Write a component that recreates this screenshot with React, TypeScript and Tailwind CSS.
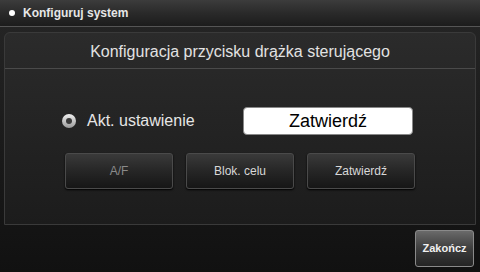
const font = { fontFamily: '"Liberation Sans", Arial, sans-serif' };

const SoftButton = ({ label, dim }: { label: string; dim?: boolean }) => (
  <div
    className={`w-[108px] h-[36px] flex items-center justify-center rounded-[3px] border border-[#4a4a4a] bg-gradient-to-b from-[#3a3a3a] via-[#262626] to-[#161616] shadow-[0_1px_2px_#000] text-[12px] ${
      dim ? "text-[#8a8a8a]" : "text-[#d8d8d8]"
    }`}
  >
    {label}
  </div>
);

export default function App() {
  return (
    <div
      className="w-[480px] h-[272px] overflow-hidden flex flex-col bg-gradient-to-b from-[#262626] to-[#111111]"
      style={font}
    >
      {/* Header */}
      <div className="h-[27px] shrink-0 flex items-center gap-[8px] pl-[9px] border-b border-[#555] bg-gradient-to-b from-[#3c3c3c] via-[#2a2a2a] to-[#1c1c1c]">
        <div className="w-[6px] h-[6px] rounded-full bg-white" />
        <span className="text-[12px] font-bold text-[#e6e6e6]">Konfiguruj system</span>
      </div>

      {/* Panel */}
      <div className="mx-[4px] mt-[5px] h-[193px] shrink-0 flex flex-col rounded-t-[6px] border border-[#3a3a3a] bg-gradient-to-b from-[#2b2b2b] to-[#1c1c1c]">
        <div className="h-[36px] shrink-0 flex items-center justify-center pt-[3px] border-b border-[#4a4a4a] text-[16px] text-[#e2e2e2]">
          Konfiguracja przycisku drążka sterującego
        </div>

        <div className="flex items-center mt-[38px] pl-[57px]">
          <div className="w-[14px] h-[14px] rounded-full bg-gradient-to-b from-[#f0f0f0] to-[#9a9a9a] flex items-center justify-center">
            <div className="w-[6px] h-[6px] rounded-full bg-[#3a3a3a]" />
          </div>
          <span className="ml-[11px] w-[110px] text-[16px] text-[#e6e6e6]">Akt. ustawienie</span>
          <div className="ml-[46px] w-[170px] h-[28px] rounded-[4px] bg-white border border-[#888] flex items-center justify-center text-[18px] text-black">
            Zatwierdź
          </div>
        </div>

        <div className="flex gap-[13px] mt-[18px] pl-[60px]">
          <SoftButton label="A/F" dim />
          <SoftButton label="Blok. celu" />
          <SoftButton label="Zatwierdź" />
        </div>
      </div>

      {/* Footer */}
      <div className="flex-1 flex justify-end items-start pt-[5px] pr-[6px]">
        <div className="w-[59px] h-[37px] flex items-center justify-center rounded-[3px] border border-[#8a8a8a] bg-gradient-to-b from-[#6a6a6a] via-[#3e3e3e] to-[#242424] text-[11px] font-bold text-[#f0f0f0]">
          Zakończ
        </div>
      </div>
    </div>
  );
}
